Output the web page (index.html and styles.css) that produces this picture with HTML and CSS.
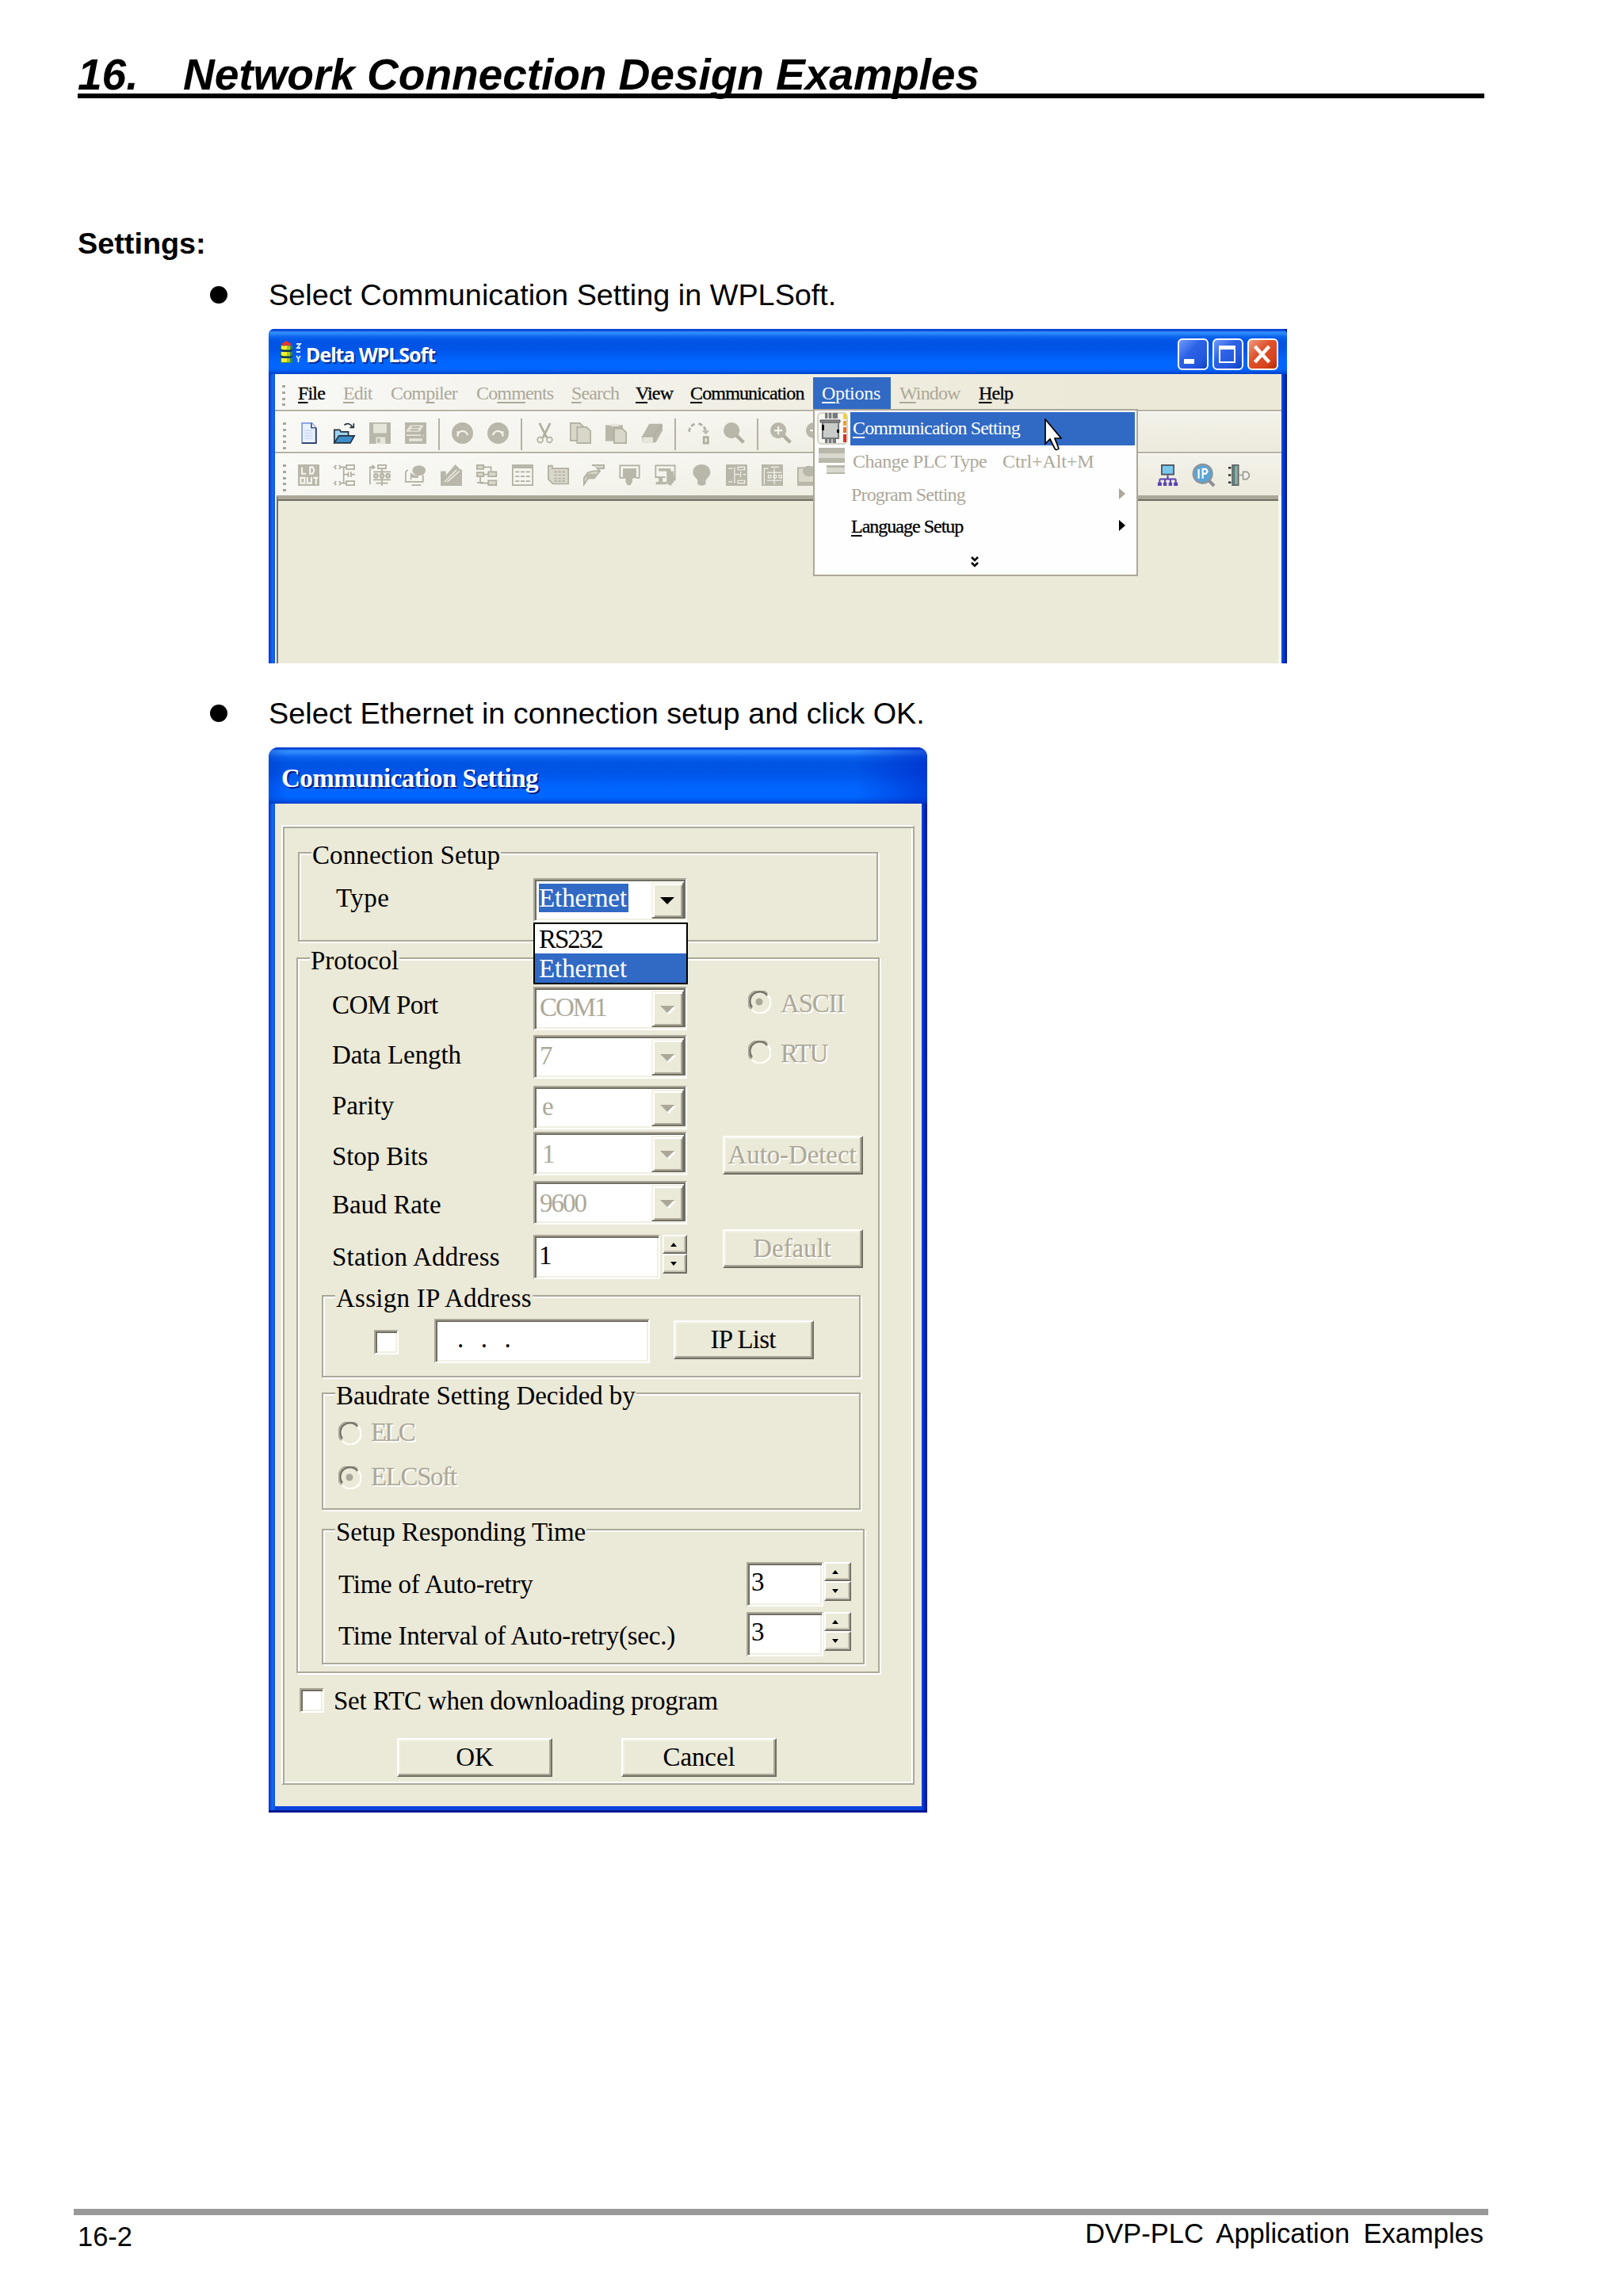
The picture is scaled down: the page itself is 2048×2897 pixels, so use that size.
FILE: index.html
```html
<!DOCTYPE html>
<html lang="en">
<head>
<meta charset="utf-8">
<title>16. Network Connection Design Examples</title>
<link rel="stylesheet" href="styles.css">
</head>
<body>
<main class="page">
  <h1 class="chapter"><span class="chapter-no">16.</span><span>Network Connection Design Examples</span></h1>
  <h2 class="section">Settings:</h2>
  <div class="step"><span class="dot"></span><span>Select Communication Setting in WPLSoft.</span></div>

  <section class="app">
    <header class="app-title">
      <svg class="app-icon" viewBox="0 0 28 30">
        <path d="M1 6h15v6H1zM1 14h15v6H1zM1 22h15v6H1z" fill="#3d8a3a"/>
        <path d="M2 6h7v5H2zM2 14h7v5H2zM2 22h7v5H2z" fill="#f3ee2f"/>
        <path d="M9 6h4v5H9zM9 14h4v5H9zM9 22h4v5H9z" fill="#a9c72c"/>
        <path d="M2 4l6-4 7 4-3 3-4-2-3 2z" fill="#e8372b"/>
        <path d="M1 11l4 2h8l3-2M1 19l4 2h8l3-2" fill="none" stroke="#1a2c1e" stroke-width="1.5"/>
        <path d="M21 4h5l-4 5h4M21 14h5M21 19l2.500 3.500L26 19M23.500 22v5" fill="none" stroke="#dff0ff" stroke-width="1.8"/>
      </svg>
      <span class="app-name">Delta WPLSoft</span>
      <span class="win-buttons">
        <span class="wb"><svg viewBox="0 0 38 40"><path d="M8 26h13v6H8z" fill="#fff"/></svg></span>
        <span class="wb"><svg viewBox="0 0 38 40"><path d="M9 11h19v19H9z" fill="none" stroke="#fff" stroke-width="2"/><path d="M8 9h21v5H8z" fill="#fff"/></svg></span>
        <span class="wb wb-close"><svg viewBox="0 0 38 40"><path d="M9.500 10l18 20M27.500 10l-18 20" stroke="#fff" stroke-width="4.500"/></svg></span>
      </span>
    </header>
    <div class="app-body">
      <nav class="menubar">
        <span class="grip grip4"></span>
        <span class="m on"><u>F</u>ile</span><span class="m"><u>E</u>dit</span><span class="m">Com<u>p</u>iler</span><span class="m">Co<u>mm</u>ents</span><span class="m"><u>S</u>earch</span><span class="m on"><u>V</u>iew</span><span class="m on"><u>C</u>ommunication</span><span class="m open"><u>O</u>ptions</span><span class="m"><u>W</u>indow</span><span class="m on"><u>H</u>elp</span>
      </nav>
      <div class="toolbar bar1">
        <span class="grip"></span>
        <svg class="ic" viewBox="0 0 16 16"><path d="M3 .5h7.500L13.500 4v11.500H3z" fill="#e9f1fd" stroke="#7d9be0"/><path d="M13.500 4v11.500H3" fill="none" stroke="#283a66"/><path d="M10 .5V4h3.500" fill="#fff" stroke="#3d5690"/><path d="M5 6h6M5 8h6M5 10h6M5 12h6" stroke="#bfd3f7" stroke-width=".7"/></svg>
        <svg class="ic" viewBox="0 0 16 16"><path d="M.5 15V5.500h4l1 1.500H11v3" fill="#9fd0ef" stroke="#24323f"/><path d="M.5 15.300L4 10h11.500l-3 5.300z" fill="#3d8ecb" stroke="#24323f"/><path d="M8 2c2-2 5-1 6 1.500M15 .8v3h-3" fill="none" stroke="#24323f"/></svg>
        <svg class="ic g" viewBox="0 0 16 16"><path class="f" d="M0 0h16v16H0z"/><path class="l" d="M3 1h10v7H3zM5 11h7v5H5z"/><path class="f" d="M6 12h2v3H6z"/></svg>
        <svg class="ic g" viewBox="0 0 16 16"><path class="f" d="M0 0h16v16H0z"/><path class="l" d="M1 6l3-4h10l-3 5H1zM1 9h13v1H1zM3 12h10v2H3z"/><path class="s" d="M5 3.500h6M4 5.500h6M14 8l-2 2"/></svg>
        <i class="sep"></i>
        <svg class="ic g" viewBox="0 0 16 16"><circle class="f" cx="8" cy="8" r="8"/><path class="w" d="M4.500 10.500V6.500M4.500 9.500c1-4 6-4 7.500 0"/></svg>
        <svg class="ic g" viewBox="0 0 16 16"><circle class="f" cx="8" cy="8" r="8"/><path class="w" d="M11.500 10.500V6.500M11.500 9.500c-1-4-6-4-7.500 0"/></svg>
        <i class="sep"></i>
        <svg class="ic g" viewBox="0 0 16 16"><path class="s2" d="M4 .5l5.500 11M12 .5L6.500 11.500"/><circle class="s" cx="4.500" cy="13" r="2"/><circle class="s" cx="11.500" cy="13" r="2"/></svg>
        <svg class="ic g" viewBox="0 0 16 16"><path class="sf" d="M.5 .5h7l3 3v10H.5z"/><path class="sf" d="M5.500 3.500h7l3 3v9h-10z"/></svg>
        <svg class="ic g" viewBox="0 0 16 16"><path class="f" d="M0 2h13v12H0z"/><path class="l" d="M4 1h6v2H4z"/><path class="sf" d="M6.500 4.500h6l3 3v8h-9z"/></svg>
        <svg class="ic g" viewBox="0 0 16 16"><path class="f" d="M6 1h10v5l-5 9H1l-.5-4z"/><path class="l" d="M1 10.500h8.500V15H1z"/><path class="s" d="M.5 10.500h9L15 2M9.500 10.500V15"/></svg>
        <i class="sep"></i>
        <svg class="ic g" viewBox="0 0 16 16"><path class="s2" d="M1 7c0-3 2-5.500 5-6M8 1c3 .5 5 3 5.500 6" stroke-dasharray="3 1.500"/><path class="f" d="M10.500 6H16l-2.500 3z"/><path class="s2" d="M12 11h3v4.500h-3z"/></svg>
        <svg class="ic g" viewBox="0 0 16 16"><circle class="f" cx="6" cy="6" r="6"/><path class="s3" d="M10 10l5 5"/></svg>
        <i class="sep"></i>
        <svg class="ic g" viewBox="0 0 16 16"><circle class="f" cx="6" cy="6" r="6"/><path class="s3" d="M10 10l5 5"/><path class="w" d="M3 6h6M6 3v6"/></svg>
        <svg class="ic g" viewBox="0 0 16 16"><circle class="f" cx="6" cy="6" r="6"/><path class="s3" d="M10 10l5 5"/><path class="w" d="M3 6h6"/></svg>
      </div>
      <div class="toolbar bar2">
        <span class="grip"></span>
        <svg class="ic g" viewBox="0 0 16 16"><path class="f" d="M0 0h16v16H0z"/><path class="w" d="M3 2v5h3M9 2h2l1 2v1l-1 2H9zM2 10h3v4H2zM7 9.500V14h3V9.500M11.500 10H15M13.500 10v5"/></svg>
        <svg class="ic g" viewBox="0 0 16 16"><path class="s" d="M2 .5L.5 2 2 3.500M4 .5L5.500 2 4 3.500M7.500 2v12M5.500 2h4M9.500 .5h6v3h-6zM7 7.500h4M11 5.500v4M13 5.500v4M13 7.500h3M2 12.500L.5 14 2 15.500M4 12.500L5.500 14 4 15.500M6 14h3.500M9.500 12.500h6v3h-6z"/></svg>
        <svg class="ic g" viewBox="0 0 16 16"><path class="s" d="M.5 15V2h3M2 .5L4 2 2 3.500M6.500 .5h6v2.500h-6zM9.500 3v13M3 5.500h13M3 11.500h13M5 14h9"/><circle class="sf" cx="5" cy="8.500" r="1.500"/><circle class="sf" cx="9.500" cy="8.500" r="1.500"/><circle class="sf" cx="14" cy="8.500" r="1.500"/></svg>
        <svg class="ic g" viewBox="0 0 16 16"><path class="s" d="M2 4L.5 6v7h13V8M5 15.500h7"/><ellipse class="f" cx="10.500" cy="4.500" rx="5" ry="3.800"/><path class="f" d="M4 6l3 2-3 4zM6 8h4v2H6z"/></svg>
        <svg class="ic g" viewBox="0 0 16 16"><path class="f" d="M0 5h4v3l7-8 4 4h1v12H0z"/><path class="w thin" d="M3 13l9-9M5 13l9-8"/></svg>
        <svg class="ic g" viewBox="0 0 16 16"><path class="sf" d="M.5 .5h5v3h-5zM.5 6h5v3h-5zM9 5.500h6v3.500H9zM9 12h6v3.500H9z"/><path class="s" d="M5 2h6v3M5 7.500h4M3 9v5h6M.5 13.500h5"/></svg>
        <svg class="ic g" viewBox="0 0 16 16"><path class="s" d="M.5 .5h15v15H.5z"/><path class="f" d="M0 0h16v3H0z"/><path class="s" d="M2.500 5.500h3M6.500 5.500h3M10.500 5.500h3M2.500 9h3M6.500 9h3M10.500 9h3M2.500 12.500h3M6.500 12.500h3M10.500 12.500h3"/></svg>
        <svg class="ic g" viewBox="0 0 16 16"><path class="sf" d="M.5 1h3v2h12v11.500H4L.5 11z"/><path class="s" d="M5 5.500h9M5 8h9M5 10.500h9M5 12.500h9" stroke-dasharray="2 1"/></svg>
        <svg class="ic g" viewBox="0 0 16 16"><path class="sf" d="M6.500 .5h9v2.500h-5l2 2-4 5H4L.5 15V10l3-4 4-1h5"/><path class="f" d="M3 7h8l-3 4H2z"/></svg>
        <svg class="ic g" viewBox="0 0 16 16"><path class="s" d="M3 10H.8V.8h14.400V10H13"/><path class="f" d="M3 3h10v7l-3 .5V13l-1.500 2.500h-2L5 13v-2.500H3z"/></svg>
        <svg class="ic g" viewBox="0 0 16 16"><path class="s" d="M8 9.500H.8V.8h14.400V12"/><path class="f" d="M3 3h9v2H3zM9 5h5l1 7-3 4-3-2zM3 10h3v3H3zM1 13h8v2H1z"/></svg>
        <svg class="ic g" viewBox="0 0 16 16"><path class="f" d="M8.500 0c4 0 6.500 2.500 6.500 6 0 3-3 4-3.500 6.500V15l-3 1-3-1v-3C5 10 2 9 2 6c0-3.500 2.500-6 6.500-6z"/></svg>
        <svg class="ic g" viewBox="0 0 16 16"><path class="f" d="M0 0h16v16H0z"/><path class="w thin" d="M2 3h3M6.500 2v12M9 2h5v2H9zM7 7.500h3M11 5.500v4M13 7.500h2M9 12h5v2H9zM2 13h3"/></svg>
        <svg class="ic g" viewBox="0 0 16 16"><path class="f" d="M0 0h16v16H0z"/><path class="w thin" d="M2 15V3h3M7 2h6M9.500 3v12M4 6h11M4 12h11M5 8h2v2H5zM9 8h2v2H9zM13 8h2v2h-2z"/></svg>
        <svg class="ic g" viewBox="0 0 16 16"><path class="sf" d="M.5 2.500h15v11H.5z"/><ellipse class="f" cx="9" cy="5" rx="5" ry="4"/><path class="f" d="M0 13h14v3H0z"/></svg>
        <svg class="ic first-live" viewBox="0 0 16 16"><path d="M3.500 .5h9v7h-9z" fill="#79c9ee" stroke="#4a4f55"/><path d="M8 8v3M2 11h12M2 11v4M6 11v4M10 11v4M14 11v4" stroke="#5a43b0" stroke-width="1.200" fill="none"/><path d="M.5 13.500h3v2.500h-3zM4.700 13.500h2.600v2.500H4.700zM8.700 13.500h2.600v2.500H8.700zM12.500 13.500h3v2.500h-3z" fill="#5a43b0"/></svg>
        <svg class="ic live" viewBox="0 0 16 16"><circle cx="7.500" cy="7" r="7" fill="#5aa5d6" stroke="#8d949c" stroke-width="1.500"/><path d="M12 12l4 4" stroke="#8a8f94" stroke-width="2.400"/><path d="M4.500 3.500v7M7.500 10.500v-7h2.500l1 1.700-1 1.700H7.500" stroke="#fff" stroke-width="1.300" fill="none"/></svg>
        <svg class="ic live" viewBox="0 0 16 16"><path d="M3 .5h4.500v15H3z" fill="#96a9a2" stroke="#5b6568"/><path d="M4.300 1v14" stroke="#3c7d70"/><path d="M0 2.500h2M0 8h2M0 13.500h2" stroke="#333" stroke-width="1.400"/><path d="M8 8h3M11 5.500h3l1.500 1.500v2L14 11h-3z" fill="#f2f2ee" stroke="#9d9c92"/></svg>
      </div>
      <div class="client"></div>
    </div>

    <div class="dropdown">
      <div class="di sel"><span class="di-icon boxed"><svg viewBox="0 0 39 41"><path d="M10 1h16v7H10zM10 33h14v6H10z" fill="#777a7c"/><path d="M14 1v7M19 1v7M14 33v6M19 33v6" stroke="#c5c8c8" stroke-width="2"/><path d="M4 10h25v3H4z" fill="#8a8c8c" stroke="#555"/><path d="M7 13h20v20H7z" fill="#c9cdc9" stroke="#77797a" stroke-width="2"/><path d="M6 16h3v7H6zM25 22h3v4h-3z" fill="#000"/><path d="M33 2h4v7h-4z" fill="#f7d21a"/><path d="M33 11h4v6h-4z" fill="#f0a02a"/><path d="M33 19h4v7h-4z" fill="#e5702a"/><path d="M33 28h4v10h-4z" fill="#dc3224"/></svg></span><span class="di-text"><u>C</u>ommunication Setting</span></div>
      <div class="di off"><span class="di-icon"><svg viewBox="0 0 39 41"><path d="M2 3h33v7H2zM2 16h33v6H2zM12 25h23v11H12z" fill="#b9b7aa"/><path d="M2 10h33v6H2zM12 28h23v6H12z" fill="#d9d8ce"/></svg></span><span class="di-text plc">Change PLC Type</span><span class="di-key">Ctrl+Alt+M</span></div>
      <div class="di off sub"><span class="di-text">Program Setting</span><b class="tri"></b></div>
      <div class="di sub dark"><span class="di-text"><u>L</u>anguage Setup</span><b class="tri"></b></div>
      <svg class="more" viewBox="0 0 10 15"><path d="M1 1l4 4 4-4M1 8l4 4 4-4" fill="none" stroke="#000" stroke-width="2.600"/></svg>
    </div>
    <svg class="cursor" viewBox="0 0 22 41"><path d="M1 1v31l6-6 6 12q2 3 5 0l-5-13h8z" fill="#fff" stroke="#000" stroke-width="1.700"/></svg>
  </section>

  <div class="step step2"><span class="dot"></span><span>Select Ethernet in connection setup and click OK.</span></div>

  <section class="dialog">
    <header class="dlg-title">Communication Setting</header>
    <div class="dlg-body">
      <div class="panel">
        <div class="group g-conn">
          <div class="legend">Connection Setup</div>
          <div class="type-row">
            <span class="type-label">Type</span>
            <div class="combo live-combo"><span class="val"><mark>Ethernet</mark></span><span class="arrow"></span>
              <div class="list"><div class="num">RS232</div><div class="hot">Ethernet</div></div>
            </div>
          </div>
        </div>

        <div class="group g-proto">
          <div class="legend">Protocol</div>
          <div class="proto">
            <div class="labels"><span class="cap">COM Port</span><span>Data Length</span><span>Parity</span><span>Stop Bits</span><span>Baud Rate</span><span class="wide">Station Address</span></div>
            <div class="fields">
              <div class="combo dis"><span class="val num">COM1</span><span class="arrow"></span></div>
              <div class="combo dis"><span class="val">7</span><span class="arrow"></span></div>
              <div class="combo dis in"><span class="val">e</span><span class="arrow"></span></div>
              <div class="combo dis in low"><span class="val">1</span><span class="arrow"></span></div>
              <div class="combo dis low"><span class="val num">9600</span><span class="arrow"></span></div>
              <div class="spinrow"><span class="input station">1</span><span class="spin"><i class="up"></i><i class="down"></i></span></div>
            </div>
            <div class="side">
              <div class="radio"><svg viewBox="0 0 29 29"><use href="#ring"/><circle cx="14" cy="14" r="4.500" fill="#aca899"/></svg><span>ASCII</span></div>
              <div class="radio tight"><svg viewBox="0 0 29 29"><use href="#ring"/></svg><span>RTU</span></div>
              <div class="btn off auto">Auto-Detect</div>
              <div class="btn off">Default</div>
            </div>
          </div>

          <div class="group g-ip">
            <div class="legend wide">Assign IP Address</div>
            <div class="ip-row"><span class="check"></span><span class="input ip">.&nbsp;.&nbsp;.</span><span class="btn">IP List</span></div>
          </div>
          <div class="group g-baud">
            <div class="legend">Baudrate Setting Decided by</div>
            <div class="radio elc"><svg viewBox="0 0 29 29"><use href="#ring"/></svg><span>ELC</span></div>
            <div class="radio soft"><svg viewBox="0 0 29 29"><use href="#ring"/><circle cx="14" cy="14" r="4.500" fill="#aca899"/></svg><span>ELCSoft</span></div>
          </div>
          <div class="group g-time">
            <div class="legend">Setup Responding Time</div>
            <div class="time-row"><span class="tl">Time of Auto-retry</span><span class="input">3</span><span class="spin"><i class="up"></i><i class="down"></i></span></div>
            <div class="time-row second"><span class="tl">Time Interval of Auto-retry(sec.)</span><span class="input">3</span><span class="spin"><i class="up"></i><i class="down"></i></span></div>
          </div>
        </div>

        <div class="rtc"><span class="check"></span><span>Set RTC when downloading program</span></div>
        <div class="actions"><span class="btn">OK</span><span class="btn">Cancel</span></div>
      </div>
    </div>
  </section>

  <footer class="foot"><span class="pageno">16-2</span><span class="book">DVP-PLC&nbsp; Application&nbsp; Examples</span></footer>
</main>
<svg class="defs" width="0" height="0"><defs><g id="ring" fill="none"><path d="M25 6a13 13 0 1 1-20 18" stroke="#fffef8" stroke-width="2.500"/><path d="M4 23A13 13 0 0 1 24 4" stroke="#aca899" stroke-width="2.500"/><path d="M5 21A11 11 0 0 1 24 6" stroke="#716f64" stroke-width="2.200"/></g></defs></svg>
</body>
</html>
```
FILE: styles.css
```css
* { box-sizing: border-box; }
body { margin: 0; background: #fff; color: #000; }
.page { width: 2048px; height: 2897px; padding: 62px 0 0 98px; overflow: hidden; font-family: "Liberation Sans", Arial, sans-serif; }
.defs { display: block; }

.chapter { display: flex; width: 1775px; height: 62px; margin: 0; border-bottom: 6px solid #000; font-size: 55.2px; line-height: 64px; font-style: italic; font-weight: bold; letter-spacing: -.12px; white-space: nowrap; }
.chapter-no { width: 133px; }
.section { margin: 162px 0 0; font-size: 37.8px; line-height: 43px; }
.step { display: flex; margin: 22px 0 0 167px; font-size: 37.8px; line-height: 42px; white-space: nowrap; }
.step2 { margin-top: 42px; }
.dot { width: 22px; height: 22px; margin: 10px 52px 0 0; border-radius: 50%; background: #000; }

/* application window */
.app { position: relative; width: 1285px; height: 422px; margin: 22px 0 0 241px; display: flex; flex-direction: column; border-top-left-radius: 7px; background: linear-gradient(90deg, #0831d9 0, #166aee 5px, #0a4fe0 8px, #0a4fe0 1278px, #0134d0 1281px, #001590 1285px); font-family: "Liberation Serif", "Times New Roman", serif; }
.app-title { display: flex; height: 57px; padding: 12px 11px 0 14px; border-radius: 7px 7px 0 0; background: linear-gradient(#0846d6 0, #0846d6 2px, #3390ff 4px, #2a86fb 6px, #0b63ee 10px, #0054e3 16px, #0055e8 26px, #0066ff 42px, #0066ff 50px, #005cf0 53px, #003fc4 57px); }
.app-icon { width: 28px; height: 30px; margin-top: 3px; }
.app-name { margin: 2px 0 0 5px; color: #fff; font: bold 25px/36px "Noto Sans", "Open Sans", sans-serif; letter-spacing: -1.05px; text-shadow: 2px 2px 0 #0a2f94; }
.win-buttons { display: flex; gap: 5px; margin-left: auto; }
.wb { width: 39px; height: 40px; border: 2px solid #fff; border-radius: 6px; background: linear-gradient(135deg, #6f9bfb 0, #2d62e6 40%, #2357dc 75%, #0d3fc0 100%); }
.wb svg { display: block; width: 38px; height: 40px; margin: -2px; }
.wb-close { background: linear-gradient(135deg, #f09a80 0, #e0532f 40%, #d8431b 75%, #b12c08 100%); }
.app-body { display: flex; flex-direction: column; height: 365px; margin: 0 7px 0 8px; background: linear-gradient(90deg, #f8f8f6, #ece9d8 80%); }
.menubar { display: grid; grid-template-columns: 29px 57px 60px 108px 120px 81px 69px 155px 109px 100px auto; height: 47px; border-bottom: 2px solid #b5b2a3; font-size: 24px; letter-spacing: -.85px; line-height: 40px; }
.m { margin-top: 4px; height: 40px; padding-top: 1px; color: #aca899; white-space: nowrap; line-height: 39px; }
.m u, .di u { text-decoration-thickness: 2px; text-underline-offset: 3px; text-decoration-skip-ink: none; }
.m.on, .dark { color: #000; -webkit-text-stroke: .3px #000; }
.m.open { width: 98px; padding-left: 11px; background: #316ac5; color: #fff; letter-spacing: -.3px; }
.grip { width: 4px; height: 34px; margin-left: 9px; margin-top: 13px; background: repeating-linear-gradient(#a9a79b 0, #a9a79b 3px, transparent 3px, transparent 7.8px); }
.grip4 { height: 27px; margin-top: 14px; }
.toolbar { display: flex; align-items: flex-start; gap: 18px; height: 53px; background: linear-gradient(90deg, #fbfbf9cc, #ece9d800 80%), linear-gradient(#f3f2ea, #eceadc); border-top: 1px solid #fff; border-bottom: 2px solid #b5b2a3; }
.toolbar .grip { margin-left: 10px; margin-right: -3px; flex: none; }
.ic { flex: none; width: 27px; height: 27px; margin-top: 13px; overflow: visible; }
.sep { flex: none; width: 2px; height: 40px; margin: 8px -3px 0; background: #b5b2a3; }
.bar2 { height: 53px; border-bottom: 0; }
.first-live { margin-left: 409px; }
.g .f { fill: #b9b7aa; }
.g .l { fill: #e6e5da; }
.g .s, .g .s2, .g .s3, .g .w { fill: none; stroke: #b0ae9f; }
.g .s2 { stroke-width: 1.6; }
.g .s3 { stroke-width: 2.6; }
.g .w { stroke: #f6f6ef; stroke-width: 1.2; }
.g .thin { stroke-width: .7; }
.g .sf { fill: #d9d7ca; stroke: #b0ae9f; }
.client { flex: 1; margin: 0 4px 0 2px; border-top: 5px solid #aca899; border-left: 2px solid #716f64; background: #ebe9d8; box-shadow: inset 0 2px 0 #716f64, 4px 0 0 #f7f6ee; }

.dropdown { position: absolute; left: 687px; top: 101px; width: 410px; height: 211px; padding: 2px; border: 2px solid #aca899; background: #fefefe; z-index: 2; font-size: 24px; letter-spacing: -.85px; white-space: nowrap; }
.di { display: flex; height: 42px; line-height: 40px; }
.di-icon { width: 39px; height: 41px; margin-left: 1px; margin-right: 3px; }
.di-icon svg { display: block; width: 39px; height: 41px; }
.boxed { border-radius: 6px; background: #f7f6f1; box-shadow: inset 0 0 0 2px #d5d3c6; }
.di-text { padding-left: 3px; }
.sel .di-text { flex: 1; background: #316ac5; color: #fff; }
.off { color: #aca899; }
.plc { letter-spacing: -.5px; }
.di-key { margin-left: 20px; letter-spacing: -.1px; }
.sub { height: 40px; padding-left: 41px; padding-right: 12px; }
.dark { letter-spacing: -1px; }
.tri { margin: 12px 0 0 auto; width: 0; height: 0; border: 7px solid transparent; border-left: 8px solid; border-right: 0; }
.more { display: block; width: 10px; height: 15px; margin: 18px 0 0 195px; }
.cursor { position: absolute; left: 979px; top: 113px; width: 22px; height: 41px; z-index: 3; }

/* dialog */
.dialog { width: 831px; height: 1344px; margin: 22px 0 0 241px; display: flex; flex-direction: column; border-radius: 12px 12px 0 0; background: linear-gradient(90deg, #0831d9 0, #166aee 5px, #0a4fe0 8px, #0a4fe0 823px, #0134d0 826px, #001590 831px); border-bottom: 3px solid #001890; font: 33px/37px "Liberation Serif", "Times New Roman", serif; letter-spacing: -.1px; white-space: nowrap; }
.dlg-title { height: 71px; padding: 21px 0 0 16px; border-radius: 12px 12px 0 0; background: linear-gradient(90deg, #0030c055 0, transparent 24px, transparent 740px, #0020c088 100%), linear-gradient(#0846d6 0, #0846d6 2px, #3390ff 4px, #2a86fb 7px, #0b63ee 12px, #0054e3 20px, #0055e8 32px, #0066ff 52px, #0066ff 62px, #005cf0 66px, #0040cc 71px); color: #fff; font-size: 33px; font-weight: bold; letter-spacing: -.5px; line-height: 36px; text-shadow: 2px 2px 0 #0a1f86; }
.dlg-body { height: 1265px; margin: 0 7px 0 8px; padding: 27px 0 0 8px; background: #ebe9d8; box-shadow: 0 5px 0 #0a44dc; }
.panel { width: 799px; height: 1211px; border: 2px solid; border-color: #fff #aca899 #aca899 #fff; box-shadow: inset 2px 2px 0 #aca899, inset -2px -2px 0 #fff; }
.group { border: 2px solid #aca899; box-shadow: inset 2px 2px 0 #fff, 2px 2px 0 #fff; }
.legend { width: max-content; height: 36px; margin: -16px 0 0 15px; padding: 0 1px; background: #ebe9d8; }
.g-conn { width: 732px; height: 113px; margin: 32px 0 0 19px; }
.g-conn .legend { letter-spacing: .1px; }
.type-row { display: flex; margin-top: 11px; }
.type-label { width: 249px; margin: 7px 0 0 46px; letter-spacing: .5px; }
.combo { position: relative; display: flex; width: 194px; height: 55px; border-right: 2px solid #fff; border-bottom: 2px solid #fff; border-top: 2px solid #aca899; border-left: 2px solid #aca899; background: #fff; box-shadow: inset 2px 2px 0 #716f64, inset 0 -2px 0 #f1efe2, inset -2px 0 0 #716f64; }
.val { padding: 6px 0 0 6px; }
.low .val { padding-top: 8px; }
.in .val { padding-left: 9px; }
.live-combo .val { padding-top: 5px; }
.val mark { display: block; height: 36px; margin-left: -1px; padding-right: 2px; line-height: 37px; background: #316ac5; color: #fff; }
.arrow { position: relative; width: 41px; height: 46px; margin: 3px 2px 0 auto; border: 2px solid; border-color: #f4f2e6 #716f64 #716f64 #f4f2e6; background: #ebe9d8; box-shadow: inset 2px 2px 0 #fff, inset -2px -2px 0 #aca899; }
.arrow::after { content: ""; display: block; width: 0; height: 0; margin: 17px 0 0 9px; border: 9px solid transparent; border-top-color: #000; border-bottom: 0; }
.dis { color: #aca899; }
.dis .arrow::after { border-top-color: #aca899; filter: drop-shadow(2px 2px 0 #fff); }
.num { letter-spacing: -2px; }
.list { position: absolute; left: -2px; top: 54px; width: 195px; height: 78px; border: 2px solid #000; background: #fff; z-index: 2; }
.list div { height: 37px; padding-left: 5px; line-height: 38px; }
.list .hot { background: #316ac5; color: #fff; }
.g-proto { width: 736px; height: 903px; margin: 20px 0 0 17px; }
.proto { display: grid; grid-template-columns: 254px 239px 180px; height: 384px; margin-left: 43px; }
.labels { display: grid; grid-template-rows: 63px 64px 64px 61px 66px 36px; padding-top: 20px; }
.labels .cap { letter-spacing: -.6px; }
.wide { letter-spacing: .25px; }
.fields { display: grid; grid-template-rows: 61px 64px 58px 62px 68px 56px; padding-top: 15px; }
.spinrow, .time-row, .ip-row, .rtc, .actions { display: flex; align-items: flex-start; }
.input { width: 97px; height: 56px; padding: 5px 0 0 4px; border: 2px solid; border-color: #aca899 #fff #fff #aca899; background: #fff; box-shadow: inset 2px 2px 0 #716f64, inset -2px -2px 0 #f1efe2; }
.station { width: 160px; margin-right: 3px; padding: 6px 0 0 5px; }
.spin { width: 31px; height: 49px; display: grid; grid-template-rows: 24px 25px; }
.spin i { border: 2px solid; border-color: #fff #716f64 #716f64 #fff; background: #ebe9d8; box-shadow: inset -2px -2px 0 #c5c2b3; }
.spin i::after { content: ""; display: block; width: 0; height: 0; margin: 8px 0 0 8px; border: 4px solid transparent; }
.spin .up::after { border-bottom: 5px solid #000; border-top: 0; }
.spin .down::after { border-top: 5px solid #000; border-bottom: 0; }
.side { display: grid; grid-template-rows: 63px 120px 118px 49px; padding-top: 20px; }
.radio { display: flex; height: 36px; color: #aca899; text-shadow: 2px 2px 0 #fff; letter-spacing: -1.2px; }
.radio svg { width: 29px; height: 29px; margin: 0 12px 0 32px; }
.side .radio span { margin-top: -2px; }
.side .tight span { letter-spacing: -1.8px; }
.btn { width: 177px; height: 49px; border: 2px solid; border-color: #fff #716f64 #716f64 #fff; padding: 4px 2px 0 0; background: #ebe9d8; box-shadow: inset -2px -2px 0 #aca899, inset 2px 2px 0 #f4f2e6; text-align: center; }
.btn.off { text-shadow: 2px 2px 0 #fff; }
.g-ip, .g-baud { width: 680px; margin: 20px 0 0 30px; height: 104px; }
.check { flex: none; width: 31px; height: 31px; border: 2px solid; border-color: #aca899 #fff #fff #aca899; background: #fff; box-shadow: inset 2px 2px 0 #716f64, inset -2px -2px 0 #f1efe2; }
.ip-row .check { margin: 22px 45px 0 64px; }
.ip { width: 272px; margin: 8px 30px 0 0; padding-left: 27px; letter-spacing: 6.6px; }
.ip-row .btn { margin-top: 10px; letter-spacing: -.8px; }
.g-baud { height: 148px; margin-top: 19px; }
.g-baud .radio svg { margin: 5px 12px 0 19px; }
.g-baud .elc { margin-top: 10px; letter-spacing: -2.8px; }
.g-baud .soft { margin-top: 20px; letter-spacing: -1.4px; }
.g-time { width: 685px; height: 171px; margin: 24px 0 0 30px; }
.time-row { height: 56px; margin-top: 20px; }
.tl { width: 515px; margin: 10px 0 0 19px; letter-spacing: -.25px; }
.second { margin-top: 7px; }
.second .tl { margin-top: 12px; }
.time-row .spin { width: 34px; margin-left: 1px; }
.rtc { margin: 17px 0 0 21px; height: 36px; letter-spacing: -.25px; }
.rtc .check { margin: 2px 12px 0 0; }
.actions { gap: 87px; margin: 29px 0 0 144px; }
.actions .btn { width: 196px; padding-right: 0; }

.foot { display: flex; justify-content: space-between; width: 1785px; margin: 500px 0 0 -5px; border-top: 8px solid #999; padding: 3px 6px 0 5px; font-size: 34.5px; line-height: 40px; }
.pageno { margin-top: 4px; }
.book { word-spacing: -.9px; }
```
